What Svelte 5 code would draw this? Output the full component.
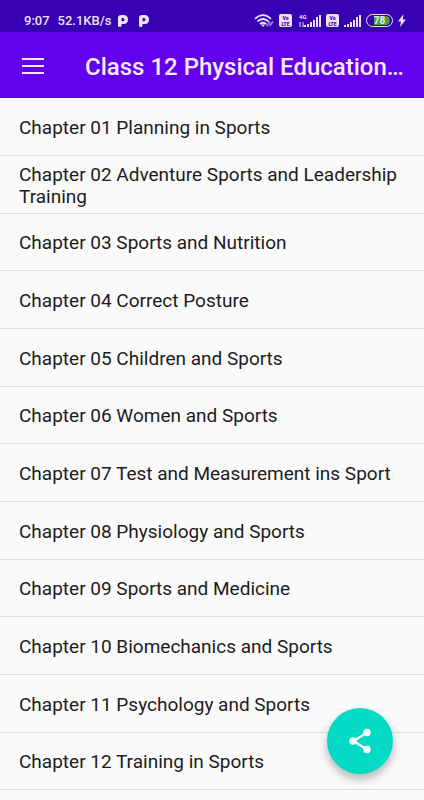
<script lang="ts">
	const title = 'Class 12 Physical Education…';

	const chapters = [
		'Planning in Sports',
		'Adventure Sports and Leadership Training',
		'Sports and Nutrition',
		'Correct Posture',
		'Children and Sports',
		'Women and Sports',
		'Test and Measurement ins Sport',
		'Physiology and Sports',
		'Sports and Medicine',
		'Biomechanics and Sports',
		'Psychology and Sports',
		'Training in Sports'
	];

	let battery = 78;

	function label(name: string, i: number) {
		return `Chapter ${String(i + 1).padStart(2, '0')} ${name}`;
	}
</script>

{#snippet parking()}
	<svg width="10" height="12" viewBox="0 0 10 12" fill="currentColor" aria-hidden="true">
		<path
			fill-rule="evenodd"
			d="M0 3Q0 0 3 0H5.500Q10 0 10 4.600T5.500 9H3.600V10.500Q3.600 12 1.800 12T0 10.500ZM3.600 3V6.200H5Q6.500 6.200 6.500 4.600T5 3Z"
		/>
	</svg>
{/snippet}

{#snippet bars()}
	<svg width="17" height="13" viewBox="0 0 17 13" fill="currentColor" aria-hidden="true">
		<path d="M0 11h2v2H0zM3 10h2v3H3zM6 8h2v5H6zM9 6h2v7H9zM12 3h2v10h-2zM15 1h2v12h-2z" />
	</svg>
{/snippet}

{#snippet volte()}
	<span class="volte"><span>Vo</span><span>LTE</span></span>
{/snippet}

<div class="status">
	<div class="left">
		<span>9:07</span>
		<span class="speed">52.1KB/s</span>
		{@render parking()}
		{@render parking()}
	</div>
	<div class="right">
		<svg width="20" height="13" viewBox="0 0 20 13" fill="none" stroke="currentColor" aria-hidden="true">
			<path d="M1 4.800Q9 -2.500 17 4.800M3.500 7.500Q9 2.500 14.500 7.500M6 10Q9 7.500 12 10" stroke-width="1.700" />
			<path d="M7 10.500h4L9 13z" fill="currentColor" stroke="none" />
			<path d="M12.500 12l3.500-4.500M15.500 12L19 7.500" stroke-width="1.700" opacity="0.6" />
		</svg>
		{@render volte()}
		<span class="signal">
			<span class="network">
				<span>4G</span>
				<svg width="5" height="5" viewBox="0 0 5 5" fill="none" stroke="currentColor" aria-hidden="true">
					<path d="M1 5V0M4 0v5M0 1.500L1 .5M5 3.500l-1 1" />
				</svg>
			</span>
			{@render bars()}
		</span>
		{@render volte()}
		{@render bars()}
		<span class="battery">
			<span class="track">
				<span class="level" style="width: {battery}%"></span>
			</span>
			<span class="percent">{battery}</span>
		</span>
		<svg width="8" height="13" viewBox="0 0 8 13" fill="currentColor" aria-hidden="true">
			<path d="M5.500 0L0 7.500h3L2 13l6-7.500H4.800z" />
		</svg>
	</div>
</div>

<header>
	<button class="menu" aria-label="Open menu">
		<svg width="24" height="18" viewBox="0 0 24 18" fill="currentColor" aria-hidden="true">
			<path d="M1 1h22v2H1zM1 8h22v2H1zM1 15h22v2H1z" />
		</svg>
	</button>
	<h1>{title}</h1>
</header>

<main>
	<ul>
		{#each chapters as chapter, i}
			<li><a href="#chapter-{i + 1}">{label(chapter, i)}</a></li>
		{/each}
	</ul>
</main>

<button class="share" aria-label="Share">
	<svg width="24" height="26" viewBox="0 0 24 26" aria-hidden="true">
		<path d="M19 4.500L5.500 13L19 21.500" fill="none" stroke="#fff" stroke-width="2.400" />
		<g fill="#fff">
			<circle cx="19" cy="4.500" r="3.700" />
			<circle cx="5" cy="13" r="3.700" />
			<circle cx="19" cy="21.500" r="3.700" />
		</g>
	</svg>
</button>

<style>
	:global(body) {
		background: #fafafa;
		font-family: Roboto, 'Liberation Sans', sans-serif;
	}

	.status {
		display: flex;
		align-items: center;
		justify-content: space-between;
		box-sizing: border-box;
		height: 32px;
		padding: 9px 18px 0 24px;
		background: #3700b3;
		color: #ece2fb;
	}

	.left,
	.right {
		display: flex;
		align-items: center;
	}

	.left {
		gap: 11px;
		font-size: 13px;
		font-weight: 500;
		line-height: 16px;
	}

	.speed {
		margin: 0 -5px 0 -3px;
	}

	.right {
		gap: 5px;
	}

	.volte {
		display: flex;
		flex-direction: column;
		align-items: center;
		justify-content: center;
		width: 13px;
		height: 13px;
		border-radius: 2px;
		background: #ece2fb;
		color: #3700b3;
		font-size: 5px;
		font-weight: 900;
		line-height: 6px;
	}

	.signal {
		display: flex;
		margin-left: 2px;
	}

	.network {
		display: flex;
		flex-direction: column;
		justify-content: space-between;
		width: 5px;
		font-size: 6px;
		font-weight: 700;
		line-height: 6px;
	}

	.battery {
		position: relative;
		display: flex;
		justify-content: center;
		box-sizing: border-box;
		width: 27px;
		height: 13px;
		border: 1px solid #ece2fb;
		border-radius: 7px;
	}

	.track {
		position: absolute;
		inset: 1px 2px;
		display: flex;
		justify-content: flex-end;
		border-radius: 5px;
		overflow: hidden;
	}

	.level {
		background: #43a52f;
	}

	.percent {
		position: relative;
		font-size: 10px;
		font-weight: 700;
		line-height: 11px;
	}

	header {
		display: flex;
		align-items: center;
		box-sizing: border-box;
		height: 66px;
		padding: 2px 16px 0 21px;
		background: #6200ee;
		color: #f8eaff;
	}

	.menu {
		display: flex;
		flex: none;
		margin-right: 40px;
		padding: 0;
		border: none;
		background: none;
		color: inherit;
		cursor: pointer;
	}

	h1 {
		margin: 0;
		padding-top: 2px;
		font-size: 24px;
		font-weight: 500;
		line-height: 32px;
		white-space: nowrap;
		overflow: hidden;
		text-overflow: ellipsis;
	}

	ul {
		display: grid;
		grid-auto-rows: 58px 58px 57px;
		margin: 0;
		padding: 0;
		list-style: none;
	}

	li {
		display: flex;
		border-bottom: 1px solid #dcdcdc;
	}

	a {
		display: flex;
		flex: 1;
		align-items: center;
		padding: 2px 19px 0;
		color: #1c1c1c;
		font-size: 19px;
		line-height: 22px;
		text-decoration: none;
	}

	.share {
		position: fixed;
		right: 31px;
		bottom: 26px;
		display: flex;
		align-items: center;
		justify-content: center;
		width: 66px;
		height: 66px;
		padding: 0;
		border: none;
		border-radius: 50%;
		background: #03dac5;
		box-shadow: 0 5px 10px rgba(0, 0, 0, 0.28);
		cursor: pointer;
	}
</style>
